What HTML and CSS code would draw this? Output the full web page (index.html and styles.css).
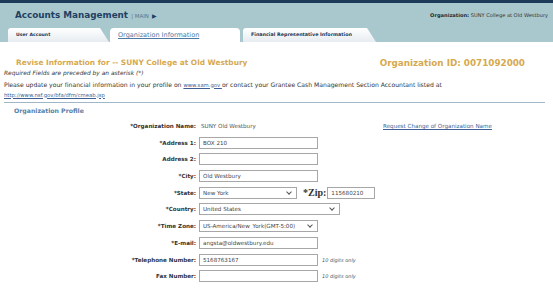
FILE: index.html
```html
<!DOCTYPE html>
<html lang="en">
<head>
    <meta charset="UTF-8">
    <meta name="viewport" content="width=device-width, initial-scale=1.0">
    <title>Accounts Management</title>
    <link rel="stylesheet" href="styles.css">
</head>
<body>
    <header class="header">
        <div class="header-row">
            <div class="brand">Accounts Management <span class="crumb">| MAIN</span> <span class="arrow">&#9654;</span></div>
            <div class="org"><b>Organization:</b> SUNY College at Old Westbury</div>
        </div>
        <nav class="tabs">
            <a class="tab" href="#">User Account</a>
            <a class="tab active" href="#">Organization Information</a>
            <a class="tab" href="#">Financial Representative Information</a>
        </nav>
    </header>

    <main class="content">
        <div class="title-row">
            <h1>Revise Information for -- SUNY College at Old Westbury</h1>
            <span class="org-id">Organization ID: 0071092000</span>
        </div>
        <p class="note">Required Fields are preceded by an asterisk (*)</p>
        <p class="info">Please update your financial information in your profile on <a href="#">www.sam.gov </a> or contact your Grantee Cash Management Section Accountant listed at<br><a href="#">http://www.nsf.gov/bfa/dfm/cmeab.jsp</a></p>

        <h2>Organization Profile</h2>

        <div class="form">
            <label>*Organization Name:</label>
            <div class="field"><span class="value">SUNY Old Westbury</span><a href="#">Request Change of Organization Name</a></div>

            <label>*Address 1:</label>
            <div class="field"><input type="text" value="BOX 210"></div>

            <label>Address 2:</label>
            <div class="field"><input type="text" value=""></div>

            <label>*City:</label>
            <div class="field"><input type="text" value="Old Westbury"></div>

            <label>*State:</label>
            <div class="field">
                <span class="select state"><select><option>New York</option></select></span>
                <span class="zip-label">*Zip:</span>
                <input class="zip" type="text" value="115680210">
            </div>

            <label>*Country:</label>
            <div class="field"><span class="select country"><select><option>United States</option></select></span></div>

            <label>*Time Zone:</label>
            <div class="field"><span class="select tz"><select><option>US-America/New_York(GMT-5:00)</option></select></span></div>

            <label>*E-mail:</label>
            <div class="field"><input type="text" value="angsta@oldwestbury.edu"></div>

            <label>*Telephone Number:</label>
            <div class="field"><input type="text" value="5168763167"><span class="hint">10 digits only</span></div>

            <label>Fax Number:</label>
            <div class="field"><input type="text" value=""><span class="hint">10 digits only</span></div>
        </div>
    </main>
</body>
</html>
```

FILE: styles.css
```css
body {
    margin: 0;
    font-family: 'DejaVu Sans', Verdana, sans-serif;
    font-size: 5.6px;
    color: #333;
    background: #fff;
}

a {
    color: #3d5f95;
}

.header {
    background: #a9c8cd;
    border-top: 3px solid #1d3a58;
    height: 39px;
    display: flex;
    flex-direction: column;
    justify-content: space-between;
}

.header-row {
    display: flex;
    justify-content: space-between;
    align-items: center;
    padding: 7px 5px 0 15px;
}

.brand {
    font-size: 8.8px;
    font-weight: bold;
    color: #1f3f63;
}

.crumb {
    font-size: 5.5px;
    font-weight: normal;
    color: #5d7486;
}

.arrow {
    font-size: 6px;
    color: #1f3f63;
}

.org {
    color: #333;
    font-size: 5.1px;
}

.org b {
    color: #1b2a38;
}

.tabs {
    display: flex;
    padding-left: 8px;
    height: 14px;
    align-items: flex-end;
}

.tab {
    height: 14px;
    line-height: 14px;
    padding: 0 14px 0 8px;
    background: linear-gradient(#ffffff, #e6ecf0);
    color: #1f3550;
    font-weight: bold;
    font-size: 4.6px;
    text-decoration: none;
    border-radius: 3px 6px 0 0;
    clip-path: polygon(0 0, calc(100% - 9px) 0, 100% 100%, 0 100%);
    box-sizing: border-box;
    flex: none;
}

.tab:nth-child(1) {
    width: 101px;
}

.tab.active {
    width: 130px;
    margin-left: 1px;
    background: #fff;
    color: #4e77a3;
    font-weight: normal;
    font-size: 6.5px;
    text-decoration: underline;
    padding-left: 8px;
    clip-path: none;
    border-radius: 4px 4px 0 0;
}

.tab:nth-child(3) {
    width: 133px;
    margin-left: 3px;
    font-size: 4.8px;
}

.content {
    width: 545px;
}

.title-row {
    display: flex;
    justify-content: space-between;
    align-items: center;
    padding: 17px 20px 0 16px;
    line-height: 8px;
}

h1, .org-id {
    margin: 0;
    font-size: 7.4px;
    font-weight: bold;
    color: #d6a94f;
}

.org-id {
    font-size: 8.8px;
}

.note {
    margin: 2px 0 0 4px;
    line-height: 8px;
    font-style: italic;
    font-size: 5.9px;
}

.info {
    margin: 2.5px 0 0 4px;
    line-height: 9px;
    font-size: 6.1px;
    padding-bottom: 2.5px;
    border-bottom: 1px solid #9fb7c6;
}

.info a {
    font-size: 5.3px;
}

h2 {
    margin: 4px 0 0 14px;
    line-height: 8px;
    font-size: 6.2px;
    font-weight: bold;
    color: #5b7ea6;
}

.form {
    display: grid;
    grid-template-columns: 196px 1fr;
    column-gap: 3px;
    grid-auto-rows: 16.7px;
    align-items: center;
    margin-top: 2.7px;
}

.form label {
    text-align: right;
    font-weight: bold;
    color: #333;
}

.field {
    display: flex;
    align-items: center;
}

.value {
    width: 182px;
    padding-left: 2px;
    color: #555;
}

input, select {
    font-family: inherit;
    font-size: 5.6px;
    color: #444;
    border: 1px solid #a7a7a7;
    background: #fff;
    height: 12px;
    box-sizing: border-box;
    padding: 0 3px;
    margin: 0;
    border-radius: 0;
}

input {
    width: 119px;
}

.select {
    position: relative;
    display: inline-block;
}

.select select {
    appearance: none;
    width: 100%;
}

.select::after {
    content: "";
    position: absolute;
    right: 6px;
    top: 3px;
    width: 3px;
    height: 3px;
    border-right: 1px solid #555;
    border-bottom: 1px solid #555;
    transform: rotate(45deg);
}

.state {
    width: 98px;
}

.country {
    width: 141px;
}

.tz {
    width: 119px;
}

.zip-label {
    font-family: 'Liberation Serif', 'Times New Roman', serif;
    font-weight: bold;
    font-size: 10px;
    color: #333;
    margin: 0 1px 0 6px;
}

.zip {
    width: 48px;
}

.hint {
    margin-left: 4px;
    font-style: italic;
    font-size: 5px;
    color: #555;
}
```
